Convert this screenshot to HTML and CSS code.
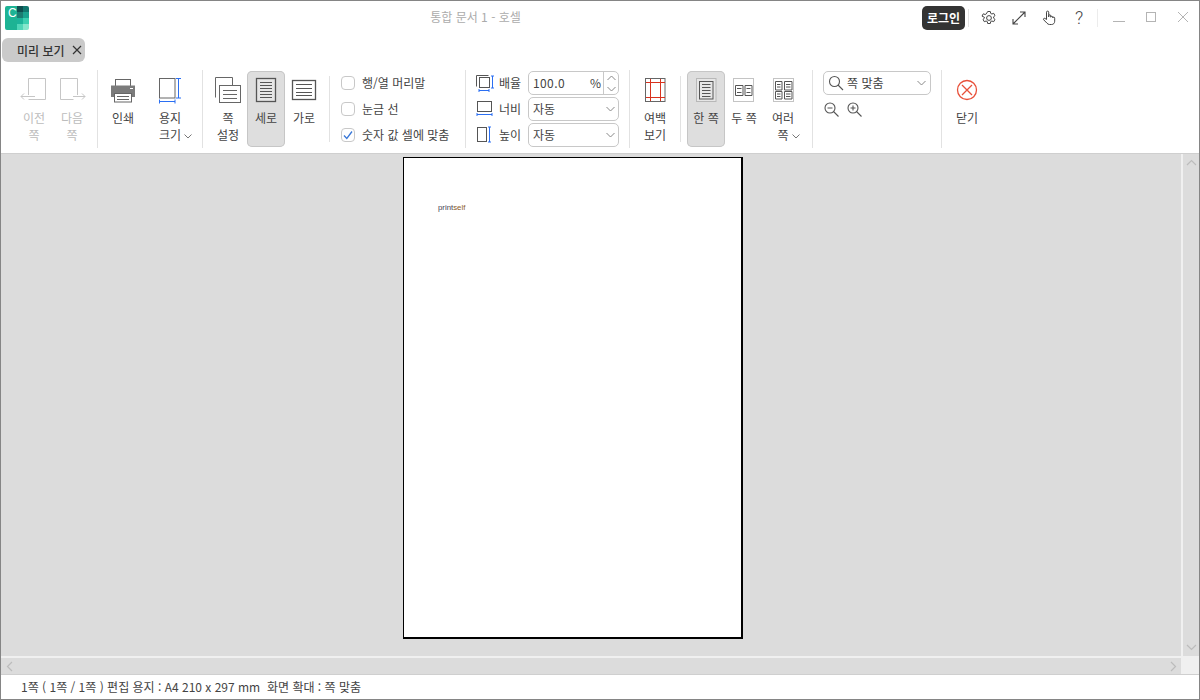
FILE: index.html
```html
<!DOCTYPE html>
<html lang="ko">
<head>
<meta charset="utf-8">
<title>통합 문서 1 - 호셀</title>
<link rel="stylesheet" href="styles.css">
</head>
<body>
<div class="window">
  <header class="titlebar">
    <svg class="logo" width="24" height="24" viewBox="0 0 24 24">
      <path fill="#1db394" d="M2 0h10v24H2a2 2 0 0 1-2-2V2a2 2 0 0 1 2-2z"/>
      <rect x="12" y="0" width="6" height="6" fill="#0f4f4f"/>
      <path fill="#12776f" d="M18 0h4a2 2 0 0 1 2 2v4h-6z"/>
      <rect x="12" y="6" width="6" height="6" fill="#1b7c72"/>
      <rect x="18" y="6" width="6" height="6" fill="#1aa38f"/>
      <rect x="12" y="12" width="6" height="6" fill="#1cb39a"/>
      <rect x="18" y="12" width="6" height="6" fill="#3ccfb0"/>
      <rect x="12" y="18" width="6" height="6" fill="#4fd6b8"/>
      <path fill="#86e6cc" d="M18 18h6v4a2 2 0 0 1-2 2h-4z"/>
      <text x="3" y="11" class="logo-c">C</text>
    </svg>
    <div class="title">통합 문서 1 - 호셀</div>
    <button class="login">로그인</button>
    <span class="tsep"></span>
    <span class="ticon">
      <svg width="16" height="16" viewBox="0 0 16 16" fill="none" stroke="#444" stroke-width="1"><path d="M6.7 1.5h2.6l.4 1.9 1.2.6 1.8-.7 1.3 2.3-1.4 1.2v1.4l1.4 1.2-1.3 2.3-1.8-.7-1.2.6-.4 1.9H6.7l-.4-1.9-1.2-.6-1.8.7-1.3-2.3 1.4-1.2V7.3L1 6.1l1.3-2.3 1.8.7 1.2-.6z"/><circle cx="8" cy="8" r="2.4"/></svg>
    </span>
    <span class="ticon">
      <svg width="16" height="16" viewBox="0 0 16 16" fill="none" stroke="#444" stroke-width="1.1"><path d="M2 14 14 2M9 2h5v5M2 9v5h5"/></svg>
    </span>
    <span class="ticon">
      <svg width="16" height="16" viewBox="0 0 16 16" fill="#fff" stroke="#444" stroke-width="1"><path d="M5.5 9.5V2.2a1.1 1.1 0 0 1 2.2 0V7V5.8a1 1 0 0 1 2 0V7.2a1 1 0 0 1 2 .1v.7a1 1 0 0 1 2 .2v3c0 2-1.3 3.3-3.2 3.3H8.600c-1.2 0-2-.5-2.7-1.4L2.700 9.800c-.8-1 .5-2 1.400-1.300z"/></svg>
    </span>
    <span class="ticon help">?</span>
    <span class="tsep tsep-win"></span>
    <span class="wicon">
      <svg width="14" height="14" viewBox="0 0 14 14" fill="none" stroke="#b4b4b4"><path d="M1 10.500h12"/></svg>
    </span>
    <span class="wicon">
      <svg width="14" height="14" viewBox="0 0 14 14" fill="none" stroke="#b4b4b4"><rect x="2.500" y="1.500" width="9" height="9"/></svg>
    </span>
    <span class="wicon">
      <svg width="14" height="14" viewBox="0 0 14 14" fill="none" stroke="#b4b4b4"><path d="M2 1l10 10M12 1 2 11"/></svg>
    </span>
  </header>

  <nav class="tabs">
    <div class="tab">
      <span class="tab-label">미리 보기</span>
      <svg width="10" height="10" viewBox="0 0 10 10" fill="none" stroke="#333" stroke-width="1.200"><path d="M1 1l8 8M9 1 1 9"/></svg>
    </div>
  </nav>

  <section class="ribbon">
    <div class="group g-nav">
      <div class="tool disabled">
        <svg class="ic" viewBox="0 0 38 34" fill="none" stroke="#c6c6c6"><path d="M13.500 24V7.500h17v21h-17M6 25.500h14M9 22.500l-3 3 3 3"/></svg>
        <div class="lbl">이전<br>쪽</div>
      </div>
      <div class="tool disabled">
        <svg class="ic" viewBox="0 0 38 34" fill="none" stroke="#c6c6c6"><path d="M7.500 28.500v-21h17V24M7.500 28.500h13M20 25.500h12M29 22.500l3 3-3 3"/></svg>
        <div class="lbl">다음<br>쪽</div>
      </div>
    </div>
    <span class="sep"></span>
    <div class="group g-print">
      <div class="tool">
        <svg class="ic" viewBox="0 0 38 34" fill="none"><rect x="11.500" y="8.500" width="15" height="7" fill="#fff" stroke="#666"/><path fill="#7b7b7b" d="M7 14.500h24V26H7z"/><path stroke="#fff" d="M26 17.500h3"/><rect x="10.500" y="22.500" width="17" height="8.500" fill="#fff" stroke="#666"/><path stroke="#666" d="M13 25.500h12M13 28.500h12"/></svg>
        <div class="lbl">인쇄</div>
      </div>
      <div class="tool">
        <svg class="ic" viewBox="0 0 38 34" fill="none"><rect x="8.500" y="7.500" width="15.500" height="19.500" stroke="#666"/><path stroke="#2b6ff2" d="M27.500 7.500v19.500M25 7.500h5M25 27h5M8.500 30.500h15.500M8.500 28.500v4M24 28.500v4"/></svg>
        <div class="lbl">용지<br>크기<svg class="chev" viewBox="0 0 8 5" fill="none" stroke="#777"><path d="M.5.5 4 4 7.500.5"/></svg></div>
      </div>
    </div>
    <span class="sep"></span>
    <div class="group g-page">
      <div class="tool">
        <svg class="ic" viewBox="0 0 38 34" fill="none" stroke="#666"><path d="M6.500 26.500v-20h17v8"/><rect x="10.500" y="14.500" width="21" height="17" fill="#fff"/><path d="M14 19.500h14M14 23.500h14M14 27.500h14"/></svg>
        <div class="lbl">쪽<br>설정</div>
      </div>
      <div class="tool selected">
        <svg class="ic" viewBox="0 0 38 34" fill="none" stroke="#555"><rect x="9.500" y="7.500" width="19" height="23" fill="#e6e6e6" stroke-width="1.300"/><path d="M13 11.500h12M13 14.500h12M13 17.500h12M13 20.500h12M13 23.500h12M13 26.500h12"/></svg>
        <div class="lbl">세로</div>
      </div>
      <div class="tool">
        <svg class="ic" viewBox="0 0 38 34" fill="none" stroke="#555"><rect x="7.500" y="9.500" width="23" height="19" fill="#fff" stroke-width="1.300"/><path d="M11 13.500h16M11 17.500h16M11 21.500h16M11 24.500h16"/></svg>
        <div class="lbl">가로</div>
      </div>
    </div>
    <span class="sep sep-short"></span>
    <div class="group g-checks">
      <label class="check"><span class="box"></span><span class="ctext">행/열 머리말</span></label>
      <label class="check"><span class="box"></span><span class="ctext">눈금 선</span></label>
      <label class="check"><span class="box"><svg width="14" height="14" viewBox="0 0 14 14" fill="none" stroke="#3a78d8" stroke-width="1.300"><path d="M3 7.500 5.800 10.500 11 3.500"/></svg></span><span class="ctext">숫자 값 셀에 맞춤</span></label>
    </div>
    <span class="sep"></span>
    <div class="group g-fields">
      <div class="frow">
        <svg class="fic" viewBox="0 0 18 18" fill="none"><path stroke="#555" d="M.5 12.500V1.500h12"/><rect x="3.500" y="3.500" width="10" height="10" stroke="#555"/><path stroke="#2b6ff2" d="M16.500 2v12M15 2h3M15 14h3M3 16.500h10M3 15v3M13 15v3"/></svg>
        <span class="flabel">배율</span>
        <div class="field spin">
          <span class="fval fnum">100.0</span><span class="unit">%</span>
          <span class="spinner">
            <svg width="9" height="6" viewBox="0 0 9 6" fill="none" stroke="#888"><path d="M.5 5 4.500 1l4 4"/></svg>
            <svg width="9" height="6" viewBox="0 0 9 6" fill="none" stroke="#888"><path d="M.5 1l4 4 4-4"/></svg>
          </span>
        </div>
      </div>
      <div class="frow">
        <svg class="fic" viewBox="0 0 18 18" fill="none"><rect x="1.500" y="1.500" width="14" height="10" stroke="#555"/><path stroke="#2b6ff2" d="M1 14.500h15M1 13v3M16 13v3"/></svg>
        <span class="flabel">너비</span>
        <div class="field"><span class="fval">자동</span><svg class="fchev" viewBox="0 0 9 6" fill="none" stroke="#888"><path d="M.5 1l4 4 4-4"/></svg></div>
      </div>
      <div class="frow">
        <svg class="fic" viewBox="0 0 18 18" fill="none"><rect x="1.500" y="1.500" width="9" height="14" stroke="#555"/><path stroke="#2b6ff2" d="M13.500 1v15M12 1h3M12 16h3"/></svg>
        <span class="flabel">높이</span>
        <div class="field"><span class="fval">자동</span><svg class="fchev" viewBox="0 0 9 6" fill="none" stroke="#888"><path d="M.5 1l4 4 4-4"/></svg></div>
      </div>
    </div>
    <span class="sep"></span>
    <div class="group g-margin">
      <div class="tool">
        <svg class="ic" viewBox="0 0 38 34" fill="none"><rect x="9.500" y="7.500" width="19.500" height="23" fill="#fff" stroke="#666"/><path stroke="#d8321e" d="M14.500 8v22M24.500 8v22M10 11.500h19M10 26.500h19"/></svg>
        <div class="lbl">여백<br>보기</div>
      </div>
    </div>
    <span class="sep sep-short"></span>
    <div class="group g-view">
      <div class="tool selected">
        <svg class="ic" viewBox="0 0 38 34" fill="none"><rect x="9.500" y="7.500" width="19.500" height="23" stroke="#b8b8b8" fill="#e6e6e6"/><rect x="12.500" y="10.500" width="13.500" height="17.500" fill="#e6e6e6" stroke="#555"/><path stroke="#555" d="M15 13.500h8.500M15 16.500h8.500M15 19.500h8.500M15 22.500h8.500M15 25.500h8.500"/></svg>
        <div class="lbl">한 쪽</div>
      </div>
      <div class="tool">
        <svg class="ic" viewBox="0 0 38 34" fill="none"><rect x="8.500" y="7.500" width="20" height="23" stroke="#c4c4c4"/><path stroke="#555" d="M10.500 14.500h7.500v10h-7.500zM20 14.500h7v10h-7zM12 17.500h4.500M12 21.500h4.500M21.500 17.500h4M21.500 21.500h4"/></svg>
        <div class="lbl">두 쪽</div>
      </div>
      <div class="tool tool-wide">
        <svg class="ic" viewBox="0 0 40 34" fill="none"><rect x="10.500" y="7.500" width="20" height="23" stroke="#c4c4c4"/><path stroke="#555" d="M12.500 10.500h6.500v8.500h-6.500zM21.500 10.500h7.500v8.500h-7.500zM12.500 20.500h6.500v7.500h-6.500zM21.500 20.500h7.500v7.500h-7.500zM14 13.500h3.500M14 16h3.500M23 13.500h4.500M23 16h4.500M14 23h3.500M14 25.500h3.500M23 23h4.500M23 25.500h4.500"/></svg>
        <div class="lbl">여러<br>쪽<svg class="chev" viewBox="0 0 8 5" fill="none" stroke="#777"><path d="M.5.5 4 4 7.500.5"/></svg></div>
      </div>
    </div>
    <span class="sep"></span>
    <div class="group g-zoom">
      <div class="field zoom-field">
        <svg class="zic" width="16" height="16" viewBox="0 0 16 16" fill="none" stroke="#555" stroke-width="1.100"><circle cx="6.500" cy="6.500" r="5"/><path d="M10 10l5 5"/></svg>
        <span class="fval">쪽 맞춤</span>
        <svg class="fchev" viewBox="0 0 9 6" fill="none" stroke="#888"><path d="M.5 1l4 4 4-4"/></svg>
      </div>
      <div class="zoom-btns">
        <svg width="15" height="15" viewBox="0 0 15 15" fill="none" stroke="#555" stroke-width="1.100"><circle cx="6" cy="6" r="5"/><path d="M9.500 9.500l5 5M3.500 6h5"/></svg>
        <svg width="15" height="15" viewBox="0 0 15 15" fill="none" stroke="#555" stroke-width="1.100"><circle cx="6" cy="6" r="5"/><path d="M9.500 9.500l5 5M3.500 6h5M6 3.500v5"/></svg>
      </div>
    </div>
    <span class="sep"></span>
    <div class="group g-close">
      <div class="tool">
        <svg class="ic" viewBox="0 0 38 34" fill="none" stroke="#e8503a" stroke-width="1.300"><circle cx="19" cy="19" r="9.500"/><path d="M14 14l10 10M24 14 14 24"/></svg>
        <div class="lbl">닫기</div>
      </div>
    </div>
  </section>

  <main class="main">
    <div class="canvas">
      <div class="sheet">
        <div class="sheet-text">print<span class="orange">self</span></div>
      </div>
    </div>
    <div class="vbar">
      <svg width="11" height="7" viewBox="0 0 11 7" fill="none" stroke="#bcbcbc" stroke-width="1.200"><path d="M1 6l4.500-4.500L10 6"/></svg>
      <svg width="11" height="7" viewBox="0 0 11 7" fill="none" stroke="#bcbcbc" stroke-width="1.200"><path d="M1 1l4.500 4.500L10 1"/></svg>
    </div>
    <div class="hbar">
      <svg width="7" height="11" viewBox="0 0 7 11" fill="none" stroke="#bcbcbc" stroke-width="1.200"><path d="M6 1 1.500 5.500 6 10"/></svg>
      <svg width="7" height="11" viewBox="0 0 7 11" fill="none" stroke="#bcbcbc" stroke-width="1.200"><path d="M1 1l4.500 4.500L1 10"/></svg>
    </div>
    <div class="corner"></div>
  </main>

  <footer class="status">1쪽 ( 1쪽 / 1쪽 ) 편집 용지 : A4 210 x 297 mm&nbsp; 화면 확대 : 쪽 맞춤</footer>
</div>
</body>
</html>
```
FILE: styles.css
```css
* { box-sizing: border-box; }
html, body { margin: 0; padding: 0; }
body {
  font-family: "Noto Sans CJK KR", "Noto Sans", sans-serif;
  font-size: 12px;
  color: #444;
  background: #fff;
}
.window {
  width: 1200px;
  height: 700px;
  border: 1px solid #858585;
  display: flex;
  flex-direction: column;
  overflow: hidden;
  background: #fff;
}

/* title bar */
.titlebar {
  height: 31px;
  flex: none;
  display: flex;
  align-items: center;
  padding-left: 4px;
}
.logo { flex: none; margin-top: 2px; }
.logo-c { font: 400 12px "Liberation Sans", sans-serif; fill: #fff; }
.title { flex: 1; text-align: center; color: #ababab; line-height: 31px; }
.login {
  width: 43px;
  height: 24px;
  margin-top: 2px;
  border: 0;
  padding: 0;
  border-radius: 5px;
  background: #333;
  color: #fff;
  font: 700 12px "Noto Sans CJK KR", sans-serif;
}
.tsep { width: 1px; height: 18px; background: #e2e2e2; margin: 2px 5px 0 3px; flex: none; }
.tsep-win { margin: 2px 5px 0 3px; background: #ececec; }
.ticon {
  width: 30px;
  height: 24px;
  margin-top: 2px;
  flex: none;
  display: flex;
  align-items: center;
  justify-content: center;
}
.help { font: 300 18px Roboto, sans-serif; color: #444; }
.wicon {
  width: 32px;
  height: 24px;
  margin-top: 2px;
  flex: none;
  display: flex;
  align-items: center;
  justify-content: center;
}

/* tabs */
.tabs { height: 32px; flex: none; padding: 6px 0 0 1px; }
.tab {
  width: 83px;
  height: 24px;
  border-radius: 6px;
  background: #cacaca;
  display: flex;
  align-items: center;
  padding-left: 15px;
  gap: 7px;
}
.tab-label { color: #333; font-weight: 500; }

/* ribbon */
.ribbon {
  height: 90px;
  flex: none;
  border-bottom: 1px solid #cfcfcf;
  display: flex;
  align-items: flex-start;
  padding-top: 6px;
}
.group { display: flex; flex: none; }
.sep { width: 1px; height: 78px; background: #e2e2e2; flex: none; }
.sep-short { height: 66px; margin-top: 6px; }
.g-nav { width: 96px; padding-left: 14px; }
.g-print { width: 104px; padding-left: 6px; gap: 9px; }
.g-page { width: 126px; padding-left: 6px; }
.g-checks { width: 135px; padding-left: 11px; flex-direction: column; }
.g-fields { width: 163px; padding: 1px 0 0 10px; flex-direction: column; gap: 2px; }
.g-margin { width: 50px; padding-left: 6px; }
.g-view { width: 131px; padding-left: 6px; }
.g-zoom { width: 128px; padding: 1px 0 0 10px; flex-direction: column; }
.g-close { width: 100px; padding-left: 6px; }

.tool {
  width: 38px;
  height: 76px;
  margin-top: 1px;
  flex: none;
  border-radius: 5px;
  text-align: center;
}
.tool-wide { width: 40px; }
.tool.selected { background: #dedede; box-shadow: inset 0 0 0 1px #c6c6c6; }
.ic { display: block; width: 100%; height: 34px; }
.lbl { margin-top: 4px; line-height: 17px; white-space: nowrap; color: #444; }
.disabled .lbl { color: #bcbcbc; }
.chev { width: 8px; height: 5px; margin: 0 -11px 1px 3px; }

/* checks */
.check { height: 26px; display: flex; align-items: center; gap: 7px; white-space: nowrap; }
.ctext { margin-top: -2px; }
.box {
  width: 14px;
  height: 14px;
  border: 1px solid #c8c8c8;
  border-radius: 4px;
  flex: none;
  display: flex;
  align-items: center;
  justify-content: center;
}
.box svg { flex: none; }

/* fields */
.frow { height: 24px; display: flex; align-items: center; }
.fic { width: 18px; height: 18px; flex: none; }
.flabel { width: 34px; padding-left: 5px; flex: none; margin-top: -2px; }
.field {
  width: 91px;
  height: 24px;
  border: 1px solid #c8c8c8;
  border-radius: 5px;
  display: flex;
  align-items: center;
  padding-left: 4px;
  flex: none;
}
.fval { flex: 1; margin-top: -2px; }
.fnum { letter-spacing: .4px; }
.fchev { width: 9px; height: 6px; margin-right: 3px; flex: none; }
.unit { margin: -2px 2px 0 0; }
.spinner {
  width: 15px;
  height: 100%;
  border-left: 1px solid #c8c8c8;
  display: flex;
  flex-direction: column;
  align-items: center;
  justify-content: center;
  gap: 5px;
  flex: none;
}
.spinner svg { display: block; }
.zoom-field { width: 108px; padding-left: 4px; gap: 3px; }
.zoom-field .fchev { margin-right: 4px; }
.zic { flex: none; }
.zoom-btns { display: flex; gap: 8px; padding: 7px 0 0 1px; }

/* main */
.main {
  flex: 1;
  min-height: 0;
  display: grid;
  grid-template-columns: 1fr 16px;
  grid-template-rows: 1fr 16px;
  background: #f0f0f0;
}
.canvas {
  background: #dcdcdc;
  margin: 0 2px 2px 0;
  padding: 3px 0 0 402px;
  overflow: hidden;
}
.sheet {
  width: 340px;
  height: 482px;
  background: #fff;
  border: solid #000;
  border-width: 1px 2px 2px 1px;
  padding: 44px 0 0 34px;
}
.sheet-text {
  font: 7.800px/12px "Liberation Sans", sans-serif;
  color: #445;
}
.orange { color: #8a5a2a; }
.vbar {
  background: #dcdcdc;
  margin-bottom: 2px;
  display: flex;
  flex-direction: column;
  align-items: center;
  justify-content: space-between;
  padding: 5px 0;
}
.hbar {
  background: #dcdcdc;
  margin-right: 2px;
  display: flex;
  align-items: center;
  justify-content: space-between;
  padding: 0 4px 0 5px;
}
.corner { background: #f0f0f0; }

/* status */
.status {
  height: 25px;
  flex: none;
  border-top: 1px solid #cfcfcf;
  padding-left: 20px;
  line-height: 23px;
  white-space: pre;
  color: #444;
}
```
